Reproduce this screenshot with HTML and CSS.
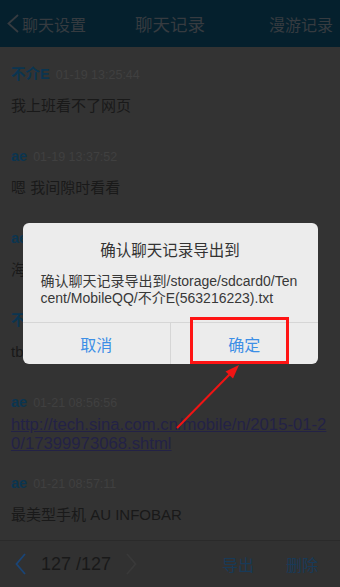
FILE: index.html
```html
<!DOCTYPE html>
<html lang="zh-CN">
<head>
<meta charset="utf-8">
<title>聊天记录</title>
<link rel="stylesheet" href="styles.css">
</head>
<body>
<div class="screen">
  <header class="topbar">
    <span class="back"><svg class="back-icon" viewBox="0 0 12 19"><polyline points="11,1 1.5,9.5 11,18"/></svg><span>聊天设置</span></span>
    <h1 class="title">聊天记录</h1>
    <span class="roam">漫游记录</span>
  </header>
  <main class="log">
    <div class="msg">
      <div class="meta"><span class="name">不介E</span><span class="time">01-19 13:25:44</span></div>
      <p class="text">我上班看不了网页</p>
    </div>
    <div class="msg">
      <div class="meta"><span class="name">ae</span><span class="time">01-19 13:37:52</span></div>
      <p class="text">嗯 我间隙时看看</p>
    </div>
    <div class="msg">
      <div class="meta"><span class="name">ae</span><span class="time">01-19 13:38:05</span></div>
      <p class="text">海淘的吗</p>
    </div>
    <div class="msg">
      <div class="meta"><span class="name">不介E</span><span class="time">01-20 09:12:30</span></div>
      <p class="text">tb上有卖</p>
    </div>
    <div class="msg msg-link">
      <div class="meta"><span class="name">ae</span><span class="time">01-21 08:56:56</span></div>
      <p class="text"><span class="link">http://tech.sina.com.cn/mobile/n/2015-01-2<br>0/17399973068.shtml</span></p>
    </div>
    <div class="msg">
      <div class="meta"><span class="name">ae</span><span class="time">01-21 08:57:11</span></div>
      <p class="text">最美型手机 AU INFOBAR</p>
    </div>
  </main>
  <footer class="bottombar">
    <button class="pager prev"><svg viewBox="0 0 11 22"><polyline points="10,1 1.5,11 10,21"/></svg></button>
    <span class="count">127 /127</span>
    <button class="pager next"><svg viewBox="0 0 11 22"><polyline points="1,1 9.5,11 1,21"/></svg></button>
    <button class="act act-export">导出</button>
    <button class="act">删除</button>
  </footer>
</div>

<div class="overlay">
  <div class="dialog">
    <h2 class="dlg-title">确认聊天记录导出到</h2>
    <p class="dlg-body">确认聊天记录导出到/storage/sdcard0/Ten<br>cent/MobileQQ/不介E(563216223).txt</p>
    <div class="dlg-actions">
      <button class="dlg-btn">取消</button>
      <button class="dlg-btn dlg-ok">确定</button>
    </div>
    <div class="highlight"></div>
  </div>
</div>

<svg class="annot" viewBox="0 0 340 587">
  <line x1="177" y1="428" x2="230" y2="374"/>
  <polygon points="239,365 233,378.5 225.5,371.5"/>
</svg>
</body>
</html>
```

FILE: styles.css
```css
html, body {
  margin: 0;
  padding: 0;
}

body {
  background: #333333;
  font-family: "Liberation Sans", "Noto Sans CJK SC", sans-serif;
  width: 340px;
  height: 587px;
  overflow: hidden;
  position: relative;
}

.screen {
  width: 340px;
  height: 587px;
  display: flex;
  flex-direction: column;
  overflow: hidden;
}

/* top bar */
.topbar {
  flex: 0 0 47px;
  box-sizing: border-box;
  background: #05202d;
  display: grid;
  grid-template-columns: 1fr auto 1fr;
  align-items: center;
  padding: 0 7px;
  color: #363b40;
}

.back {
  display: flex;
  align-items: center;
  gap: 3px;
  font-size: 16px;
}

.back-icon {
  width: 12px;
  height: 19px;
  fill: none;
  stroke: #363b40;
  stroke-width: 1.8;
}

.title {
  margin: 0;
  font-size: 17.5px;
  font-weight: normal;
}

.roam {
  justify-self: end;
  font-size: 16px;
}

/* chat log */
.log {
  flex: 1;
  padding: 17px 11px 0;
  overflow: hidden;
}

.msg {
  padding-bottom: 30px;
}

.meta {
  height: 20px;
  line-height: 20px;
  white-space: nowrap;
}

.name {
  font-weight: bold;
  font-size: 14.5px;
  color: #0b3550;
}

.time {
  font-size: 12.5px;
  color: #404040;
  margin-left: 6px;
}

.text {
  margin: 12px 0 0;
  font-size: 15px;
  line-height: 20px;
  color: #191919;
  white-space: nowrap;
}

.msg-link {
  padding-bottom: 20px;
}

.msg-link .text {
  margin-top: 3px;
  font-size: 16.7px;
  line-height: 19px;
}

.link {
  color: #232246;
  text-decoration: underline;
}

/* bottom bar */
.bottombar {
  flex: 0 0 47px;
  box-sizing: border-box;
  border-top: 1px solid #2a2a2a;
  background: #313131;
  display: flex;
  align-items: center;
  padding: 0 22px 0 15px;
}

.bottombar button {
  background: none;
  border: 0;
  padding: 0;
  font-family: inherit;
}

.pager {
  display: flex;
}

.pager svg {
  width: 11px;
  height: 22px;
  fill: none;
  stroke-width: 1.8;
}

.prev svg {
  stroke: #1a4577;
}

.next svg {
  stroke: #393939;
}

.count {
  margin: 0 15px;
  font-size: 18px;
  color: #191919;
}

.act {
  font-size: 16px;
  color: #183a58;
}

.act-export {
  margin-left: auto;
  margin-right: 32px;
}

/* dialog */
.overlay {
  position: fixed;
  inset: 0;
  display: flex;
  align-items: center;
  justify-content: center;
  z-index: 5;
}

.dialog {
  position: relative;
  width: 295px;
  background: #ececec;
  border-radius: 6px;
  padding-top: 17px;
  box-sizing: border-box;
}

.dlg-title {
  margin: 0 0 11px;
  font-size: 15.5px;
  font-weight: normal;
  line-height: 22px;
  text-align: center;
  color: #333333;
}

.dlg-body {
  margin: 0;
  padding: 0 18px 15px;
  font-size: 14px;
  line-height: 17px;
  color: #383838;
  white-space: nowrap;
}

.dlg-actions {
  display: grid;
  grid-template-columns: 1fr 1fr;
  border-top: 1px solid #d6d6d6;
}

.dlg-btn {
  height: 41px;
  background: none;
  border: 0;
  padding: 0;
  font-family: inherit;
  font-size: 16px;
  color: #3d8fe6;
}

.dlg-btn + .dlg-btn {
  border-left: 1px solid #d6d6d6;
}

.highlight {
  position: absolute;
  left: 167px;
  top: 94px;
  width: 99px;
  height: 47px;
  box-sizing: border-box;
  border: 3px solid #ff1414;
}

/* annotation arrow */
.annot {
  position: absolute;
  top: 0;
  left: 0;
  width: 340px;
  height: 587px;
  z-index: 10;
  pointer-events: none;
}

.annot line {
  stroke: #f01414;
  stroke-width: 2;
}

.annot polygon {
  fill: #f01414;
}
```
